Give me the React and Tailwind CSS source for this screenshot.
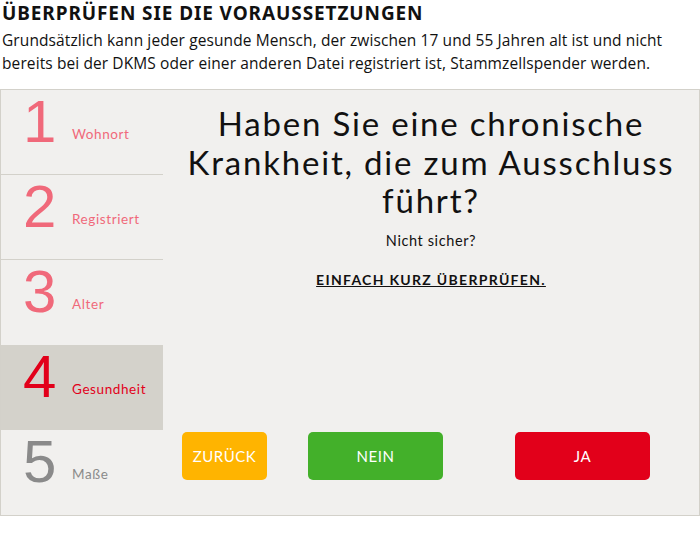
import React from 'react';

const steps = [
  { n: 1, label: 'Wohnort', state: 'done' },
  { n: 2, label: 'Registriert', state: 'done' },
  { n: 3, label: 'Alter', state: 'done' },
  { n: 4, label: 'Gesundheit', state: 'active' },
  { n: 5, label: 'Maße', state: 'todo' },
];

const App = () => {
  return (
    <div className="w-[700px] bg-white text-black" style={{ fontFamily: '"Open Sans", sans-serif' }}>
      {/* Intro */}
      <div className="px-[2px] pt-[2px]">
        <h1 className="h-[22px] text-[19px] font-bold leading-[22px] tracking-[0.9px] text-[#111]" style={{ fontFamily: '"Noto Sans", sans-serif' }}>
          ÜBERPRÜFEN SIE DIE VORAUSSETZUNGEN
        </h1>
        <p className="mt-[5px] w-[675px] text-[15.5px] leading-[23px] text-[#111]" style={{ fontFamily: '"Open Sans", sans-serif', letterSpacing: '0.1px' }}>
          Grundsätzlich kann jeder gesunde Mensch, der zwischen 17 und 55 Jahren alt ist und nicht bereits bei der DKMS oder einer anderen Datei registriert ist, Stammzellspender werden.
        </p>
      </div>

      {/* Wizard */}
      <div className="mt-[14px] flex h-[427px] border border-[#d3d1ca] bg-[#f1f0ee]">
        <div className="flex w-[162px] flex-col">
          {steps.map((s, i) => (
            <div
              key={s.n}
              className={`flex h-[85px] items-start pt-[2px] ${i < 4 && steps[i + 1].state !== 'active' && s.state !== 'active' ? 'border-b border-[#d3d1ca]' : ''} ${s.state === 'active' ? 'bg-[#d4d2cb]' : ''}`}
            >
              <span
                className={`ml-[22px] w-[36px] text-[60px] leading-none ${s.state === 'active' ? 'text-[#e2001a]' : s.state === 'todo' ? 'text-[#8a8a8a]' : 'text-[#f0697a]'}`}
                style={{ fontFamily: '"Liberation Sans", Arial, sans-serif' }}
              >
                {s.n}
              </span>
              <span
                className={`ml-[13px] mt-[32px] text-[13.5px] leading-[20px] ${s.state === 'active' ? 'text-[#e2001a]' : s.state === 'todo' ? 'text-[#8a8a8a]' : 'text-[#f0697a]'}`}
                style={{ fontFamily: 'Lato, sans-serif', letterSpacing: '0.6px' }}
              >
                {s.label}
              </span>
            </div>
          ))}
        </div>

        <div className="flex flex-1 flex-col">
          <div className="flex flex-col items-center pt-[14px] text-center">
            <h2 className="w-[510px] text-[33px] leading-[38.5px] text-[#111]" style={{ fontFamily: 'Lato, sans-serif', letterSpacing: '1.8px' }}>
              Haben Sie eine chronische Krankheit, die zum Ausschluss führt?
            </h2>
            <p className="mt-[10px] text-[14.5px] text-[#111]" style={{ fontFamily: 'Lato, sans-serif', letterSpacing: '0.6px' }}>Nicht sicher?</p>
            <a className="mt-[18px] text-[14px] font-bold tracking-[1.3px] text-[#111] underline" style={{ fontFamily: 'Lato, sans-serif' }}>
              EINFACH KURZ ÜBERPRÜFEN.
            </a>
          </div>

          <div className="mt-auto mb-[35px] flex items-center pl-[19px]" style={{ fontFamily: 'Lato, sans-serif' }}>
            <button className="h-[48px] w-[85px] rounded-[5px] bg-[#ffb400] text-[15px] tracking-[0.5px] text-white">ZURÜCK</button>
            <button className="ml-[41px] h-[48px] w-[135px] rounded-[5px] bg-[#43b02a] text-[15px] tracking-[0.5px] text-white">NEIN</button>
            <button className="ml-[72px] h-[48px] w-[135px] rounded-[5px] bg-[#e2001a] text-[15px] tracking-[0.5px] text-white">JA</button>
          </div>
        </div>
      </div>
    </div>
  );
};

export default App;
